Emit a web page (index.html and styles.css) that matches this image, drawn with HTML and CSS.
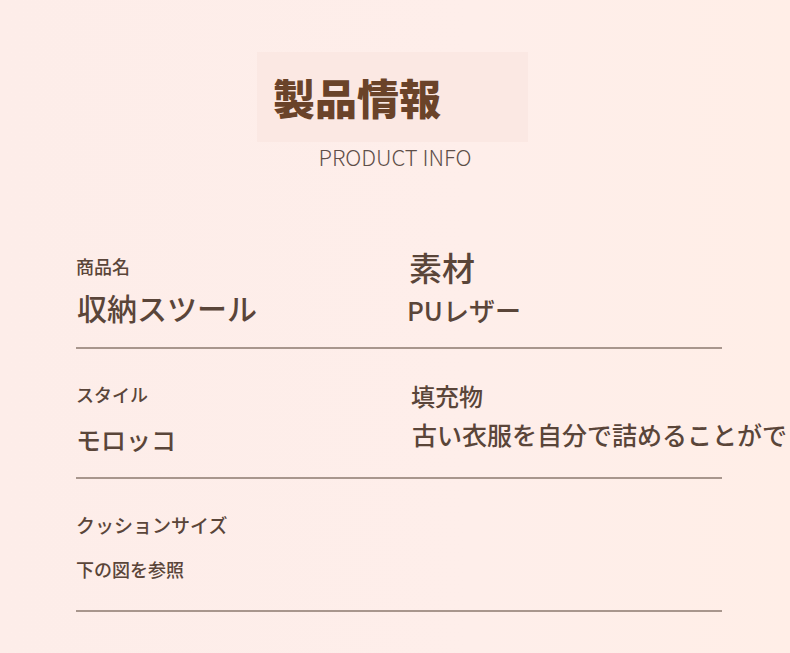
FILE: index.html
```html
<!DOCTYPE html>
<html lang="ja">
<head>
<meta charset="utf-8">
<title>製品情報</title>
<link rel="stylesheet" href="styles.css">
</head>
<body>
<header class="head">
  <div class="title-box"><h1 class="title">製品情報</h1></div>
  <p class="subtitle">PRODUCT INFO</p>
</header>
<main class="spec">
  <section class="row row1">
    <div class="cell">
      <div class="label l-name">商品名</div>
      <div class="value v-name">収納スツール</div>
    </div>
    <div class="cell">
      <div class="label l-mat">素材</div>
      <div class="value v-mat">PUレザー</div>
    </div>
  </section>
  <section class="row row2">
    <div class="cell">
      <div class="label l-style">スタイル</div>
      <div class="value v-style">モロッコ</div>
    </div>
    <div class="cell">
      <div class="label l-fill">填充物</div>
      <div class="value v-fill">古い衣服を自分で詰めることができます</div>
    </div>
  </section>
  <section class="row row3">
    <div class="cell">
      <div class="label l-size">クッションサイズ</div>
      <div class="value v-size">下の図を参照</div>
    </div>
    <div class="cell"></div>
  </section>
</main>
</body>
</html>
```
FILE: styles.css
```css
html {
  overflow: hidden;
}
body {
  margin: 0;
  width: 790px;
  height: 653px;
  overflow: hidden;
  background: linear-gradient(90deg, #fdede9 0%, #feeeea 60%, #ffeee7 100%);
  font-family: "Noto Sans CJK JP", "Noto Sans", sans-serif;
  color: #5a4539;
}
.head {
  padding-top: 52px;
}
.title-box {
  margin-left: 257px;
  width: 255px;
  height: 90px;
  padding-left: 16px;
  background: #fbe8e3;
  display: flex;
  align-items: center;
}
.title {
  margin: 0;
  font-size: 42px;
  line-height: 42px;
  font-weight: 900;
  color: #6a4329;
}
.subtitle {
  margin: 3px 0 0;
  text-align: center;
  font-size: 22px;
  line-height: 22px;
  font-weight: 300;
  color: #5e4f49;
}
.spec {
  margin-left: 76px;
  width: 646px;
}
.row {
  display: grid;
  grid-template-columns: 333px 1fr;
  border-bottom: 2px solid #a8968d;
}
.cell {
  display: flex;
  flex-direction: column;
  align-items: flex-start;
  white-space: nowrap;
}
.label, .value {
  line-height: 1;
  font-weight: 500;
}
.row1 { padding-bottom: 24px; }
.row2 { padding-bottom: 25px; }
.row3 { padding-bottom: 32px; }

.l-name { font-size: 18px; margin-top: 90px; }
.v-name { font-size: 30px; margin-top: 17px; margin-left: 1px; }
.l-mat { font-size: 33px; margin-top: 84px; }
.v-mat { font-size: 26px; margin-top: 13px; margin-left: -2px; }

.l-style { font-size: 18px; margin-top: 36px; }
.v-style { font-size: 25px; margin-top: 24px; }
.l-fill { font-size: 24px; margin-top: 35px; margin-left: 2px; }
.v-fill { font-size: 25px; margin-top: 14px; margin-left: 3px; }

.l-size { font-size: 19px; margin-top: 36px; }
.v-size { font-size: 18px; margin-top: 26px; }
```
